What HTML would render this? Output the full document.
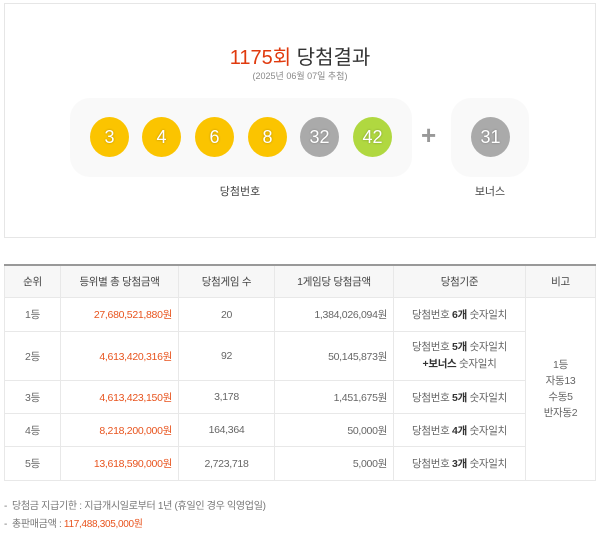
<!DOCTYPE html>
<html><head><meta charset="utf-8"><style>
body{margin:0;background:#fff;font-family:"Liberation Sans","Noto Sans CJK KR",sans-serif;color:#555;width:600px;height:540px;position:relative;overflow:hidden}
.box{position:absolute;left:4px;top:3px;width:590px;height:233px;border:1px solid #e6e6e6}
.t{position:absolute;left:0;width:600px;text-align:center}
.pill{position:absolute;background:#f9f9f9;border-radius:20px}
.b{position:absolute;width:39px;height:40px;border-radius:50%;color:#fff;font-size:18px;text-align:center;line-height:40px;text-shadow:0 0 2px rgba(0,0,0,.3)}
.y{background:#fbc400}.g{background:#aaa}.gr{background:#b0d840}
table{position:absolute;left:4px;top:264px;width:592px;border-collapse:collapse;font-size:10.5px;border-top:2px solid #999;letter-spacing:-0.3px}
td,th{border:1px solid #e8e8e8;text-align:center;color:#666;font-weight:normal;padding:0}
th{background:#f7f7f7;height:31px;color:#444}
td.r{text-align:right;padding-right:6px}
.o{color:#e8541e}
b{color:#333}
</style></head><body>
<div class="box"></div>
<div class="t" style="top:41px;font-size:20px;color:#333"><span style="color:#e03a0e">1175회</span> 당첨결과</div>
<div class="t" style="top:69px;font-size:9px;color:#888">(2025년 06월 07일 추첨)</div>
<div class="pill" style="left:70px;top:98px;width:342px;height:79px"></div>
<div class="pill" style="left:451px;top:98px;width:78px;height:79px"></div>
<div class="b y" style="left:90px;top:117px">3</div>
<div class="b y" style="left:142px;top:117px">4</div>
<div class="b y" style="left:195px;top:117px">6</div>
<div class="b y" style="left:248px;top:117px">8</div>
<div class="b g" style="left:300px;top:117px">32</div>
<div class="b gr" style="left:353px;top:117px">42</div>
<div style="position:absolute;left:421px;top:120px;font-size:26px;font-weight:bold;color:#999">+</div>
<div class="b g" style="left:471px;top:117px">31</div>
<div style="position:absolute;left:215px;top:183px;width:50px;text-align:center;font-size:11px;color:#444">당첨번호</div>
<div style="position:absolute;left:465px;top:183px;width:50px;text-align:center;font-size:11px;color:#444">보너스</div>
<table>
<tr><th style="width:55px">순위</th><th style="width:117px">등위별 총 당첨금액</th><th style="width:95px">당첨게임 수</th><th style="width:118px">1게임당 당첨금액</th><th style="width:131px">당첨기준</th><th>비고</th></tr>
<tr style="height:34px"><td>1등</td><td class="r o">27,680,521,880원</td><td>20</td><td class="r">1,384,026,094원</td><td>당첨번호 <b>6개</b> 숫자일치</td><td rowspan="5" style="line-height:16px">1등<br>자동13<br>수동5<br>반자동2</td></tr>
<tr style="height:49px"><td>2등</td><td class="r o">4,613,420,316원</td><td>92</td><td class="r">50,145,873원</td><td style="line-height:17px">당첨번호 <b>5개</b> 숫자일치<br><b>+보너스</b> 숫자일치</td></tr>
<tr style="height:33px"><td>3등</td><td class="r o">4,613,423,150원</td><td>3,178</td><td class="r">1,451,675원</td><td>당첨번호 <b>5개</b> 숫자일치</td></tr>
<tr style="height:33px"><td>4등</td><td class="r o">8,218,200,000원</td><td>164,364</td><td class="r">50,000원</td><td>당첨번호 <b>4개</b> 숫자일치</td></tr>
<tr style="height:34px"><td>5등</td><td class="r o">13,618,590,000원</td><td>2,723,718</td><td class="r">5,000원</td><td>당첨번호 <b>3개</b> 숫자일치</td></tr>
</table>
<div style="position:absolute;left:4px;top:497px;font-size:10px;color:#777;letter-spacing:-0.3px">-&nbsp;&nbsp;당첨금 지급기한 : 지급개시일로부터 1년 (휴일인 경우 익영업일)</div>
<div style="position:absolute;left:4px;top:515px;font-size:10px;color:#777;letter-spacing:-0.3px">-&nbsp;&nbsp;총판매금액 : <span class="o">117,488,305,000원</span></div>
</body></html>
